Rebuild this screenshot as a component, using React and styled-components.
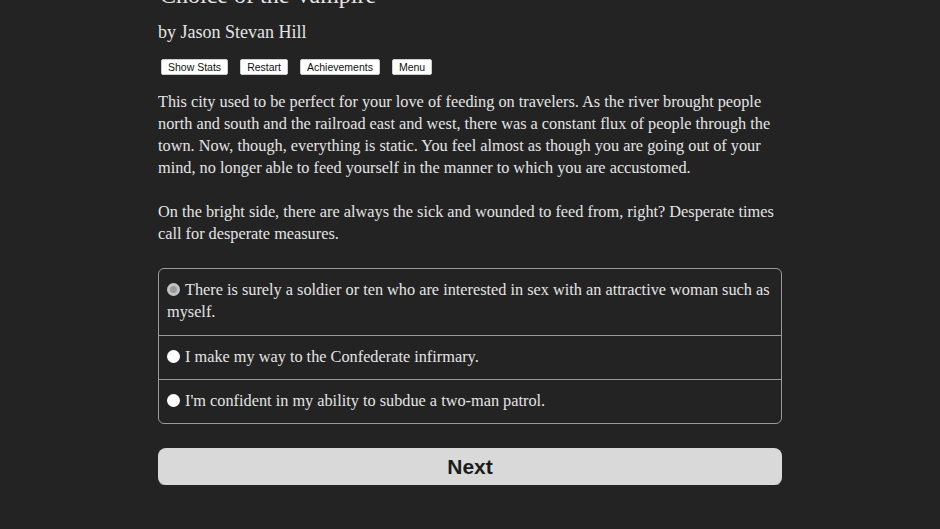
import React, { useState } from "react";
import styled, { createGlobalStyle } from "styled-components";

const GlobalStyle = createGlobalStyle`
  html, body {
    margin: 0;
    padding: 0;
    background: #232323;
    overflow: hidden;
  }
  body {
    font-family: "Liberation Serif", "DejaVu Serif", serif;
    color: #e4e4e4;
  }
`;

const choices = [
  "There is surely a soldier or ten who are interested in sex with an attractive woman such as myself.",
  "I make my way to the Confederate infirmary.",
  "I'm confident in my ability to subdue a two-man patrol.",
];

const App = () => {
  const [picked, setPicked] = useState(0);
  return (
    <>
      <GlobalStyle />
      <Page>
        <Title>Choice of the Vampire</Title>
        <Author>by Jason Stevan Hill</Author>
        <Toolbar>
          <SmallButton>Show Stats</SmallButton>
          <SmallButton>Restart</SmallButton>
          <SmallButton>Achievements</SmallButton>
          <SmallButton>Menu</SmallButton>
        </Toolbar>
        <Text>
          This city used to be perfect for your love of feeding on travelers. As
          the river brought people north and south and the railroad east and
          west, there was a constant flux of people through the town. Now,
          though, everything is static. You feel almost as though you are going
          out of your mind, no longer able to feed yourself in the manner to
          which you are accustomed.
        </Text>
        <Text>
          On the bright side, there are always the sick and wounded to feed
          from, right? Desperate times call for desperate measures.
        </Text>
        <ChoiceList>
          {choices.map((c, i) => (
            <ChoiceRow key={i} onClick={() => setPicked(i)}>
              <Radio $checked={picked === i} />
              {c}
            </ChoiceRow>
          ))}
        </ChoiceList>
        <NextButton>Next</NextButton>
      </Page>
    </>
  );
};

const Page = styled.main`
  width: 624px;
  margin: 0 auto;
  display: flex;
  flex-direction: column;
`;

const Title = styled.h1`
  margin: -20px 0 0 2px;
  font-size: 24px;
  line-height: 30px;
  font-weight: normal;
`;

const Author = styled.h2`
  margin: 10px 0 0 0;
  font-size: 18px;
  line-height: 24px;
  font-weight: normal;
`;

const Toolbar = styled.div`
  display: flex;
  gap: 12px;
  margin: 15px 0 0 3px;
`;

const SmallButton = styled.button`
  font-family: "Liberation Sans", Arial, sans-serif;
  font-size: 10.5px;
  line-height: 12px;
  padding: 1px 6px;
  background: #fff;
  color: #111;
  border: 1px solid #ccc;
  border-radius: 2px;
`;

const Text = styled.p`
  margin: 16px 0 0 0;
  font-size: 16.3px;
  line-height: 22px;
  & + & {
    margin-top: 22px;
  }
`;

const ChoiceList = styled.div`
  margin-top: 23px;
  border: 1px solid #9a9a9a;
  border-radius: 6px;
  overflow: hidden;
`;

const ChoiceRow = styled.label`
  display: block;
  padding: 10px 8px 11px;
  font-size: 16.3px;
  line-height: 22px;
  cursor: pointer;
  &:first-child {
    padding-bottom: 12px;
  }
  & + & {
    border-top: 1px solid #9a9a9a;
  }
`;

const Radio = styled.span`
  display: inline-block;
  box-sizing: border-box;
  width: 13px;
  height: 13px;
  border-radius: 50%;
  margin-right: 5px;
  vertical-align: -1px;
  background: ${(p) => (p.$checked ? "#9a9a9a" : "#fff")};
  border: ${(p) => (p.$checked ? "3px solid #c4c4c4" : "none")};
`;

const NextButton = styled.button`
  margin-top: 24px;
  height: 37px;
  width: 100%;
  background: #d9d9d9;
  color: #1c1c1c;
  border: none;
  border-radius: 8px;
  box-shadow: 0 1px 0 #777;
  font-family: "Liberation Sans", Arial, sans-serif;
  font-weight: bold;
  font-size: 21px;
`;

export default App;
